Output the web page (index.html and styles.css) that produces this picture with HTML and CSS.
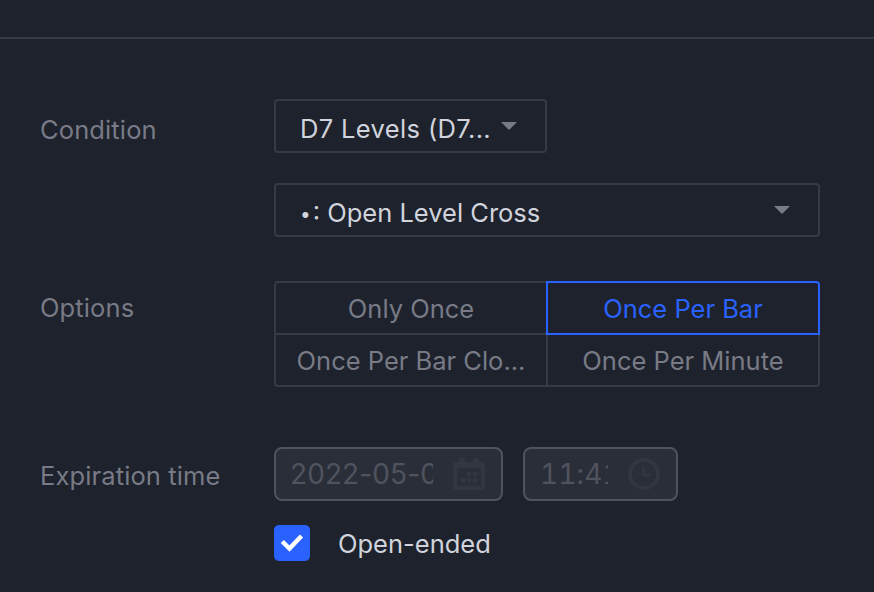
FILE: index.html
```html
<!DOCTYPE html>
<html lang="en">
<head>
<meta charset="utf-8">
<title>Create Alert</title>
<link rel="stylesheet" href="styles.css">
</head>
<body>
<main class="dialog">
  <header class="dialog-header"></header>
  <form class="form">
    <div class="row row-condition">
      <div class="label"><span>Condition</span></div>
      <div class="control selects">
        <div class="select select-half"><span class="t-source">D7 Levels (D7...</span><svg class="caret" viewBox="0 0 16 8"><path d="M0 0h16L8 8z"/></svg></div>
        <div class="select"><span class="t-plot"><span class="bullet">•</span>: Open Level Cross</span><svg class="caret" viewBox="0 0 16 8"><path d="M0 0h16L8 8z"/></svg></div>
      </div>
    </div>
    <div class="row row-options">
      <div class="label"><span>Options</span></div>
      <div class="control options">
        <div class="option tl"><span>Only Once</span></div>
        <div class="option tr active"><span>Once Per Bar</span></div>
        <div class="option bl"><span>Once Per Bar Clo...</span></div>
        <div class="option br"><span>Once Per Minute</span></div>
      </div>
    </div>
    <div class="row row-expiration">
      <div class="label"><span>Expiration time</span></div>
      <div class="control">
        <div class="fields">
          <div class="field field-date"><span class="value">2022-05-0</span>
            <svg class="icon" viewBox="0 0 32 32"><path fill-rule="evenodd" d="M6 4V2q0-2 2-2h2q2 0 2 2v2h8V2q0-2 2-2h2q2 0 2 2v2h4q2 0 2 2v24q0 2-2 2H2q-2 0-2-2V6q0-2 2-2zM4 10v18h24V10z"/><path d="M14 14h4v4h-4zM20 14h4v4h-4zM8 20h4v4H8zM14 20h4v4h-4zM20 20h4v4h-4z"/></svg>
          </div>
          <div class="field field-time"><span class="value">11:41</span>
            <svg class="icon" viewBox="0 0 32 32"><circle class="stroke" cx="16" cy="16" r="14"/><path class="stroke thin" d="M15.500 9.500v7.500h7"/></svg>
          </div>
        </div>
        <div class="check-row">
          <div class="checkbox"><svg viewBox="0 0 36 36"><path d="M8.300 16.500l7.200 7L27.500 11"/></svg></div>
          <span class="t-open">Open-ended</span>
        </div>
      </div>
    </div>
  </form>
</main>
</body>
</html>
```
FILE: styles.css
```css
* { box-sizing: border-box; }

body {
  margin: 0;
  background: #1e222d;
  font-family: Inter, "Liberation Sans", sans-serif;
  font-size: 25.5px;
  line-height: 32px;
  letter-spacing: 0;
  color: #d1d4dc;
}

.dialog { height: 592px; overflow: hidden; }
.dialog-header { height: 39px; border-bottom: 2px solid #363a45; }
.form { padding: 60px 54px 0 40px; }

.row { display: grid; grid-template-columns: 234px 546px; }
.row-options { margin-top: 44px; }
.row-expiration { margin-top: 60px; }

.label { height: 54px; padding-top: 15px; color: #787b86; white-space: nowrap; letter-spacing: 0.12px; }
.row-options .label { padding-top: 11px; }
.row-expiration .label { padding-top: 15px; }

.selects { display: grid; gap: 30px; }
.select {
  display: flex;
  justify-content: space-between;
  height: 54px;
  padding: 12px 28px 0 24px;
  border: 2px solid #363a45;
  border-radius: 4px;
  white-space: nowrap;
}
.select-half { width: 273px; }
.t-source { letter-spacing: 0.36px; }
.bullet { font-size: 19px; letter-spacing: 2px; vertical-align: 1px; line-height: 1; }
.caret { width: 16px; height: 8px; margin-top: 9px; fill: #787b86; }

.options { display: grid; grid-template-columns: 272px 272px; grid-template-rows: 52px 52px; }
.option {
  width: 274px;
  height: 54px;
  padding-top: 10px;
  border: 2px solid #363a45;
  color: #787b86;
  text-align: center;
  white-space: nowrap;
}
.tl { border-top-left-radius: 4px; }
.tr { border-top-right-radius: 4px; }
.bl { border-bottom-left-radius: 4px; }
.br { border-bottom-right-radius: 4px; }
.active { z-index: 1; border-color: #2962ff; color: #2962ff; }

.fields { display: flex; gap: 20px; margin-top: 2px; }
.field {
  display: flex;
  justify-content: space-between;
  height: 54px;
  padding: 9px 16px 0 14px;
  border: 2px solid #50535e;
  border-radius: 8px;
  background: #2a2e39;
  color: #50535e;
}
.field-date { width: 229px; }
.field-time { width: 155px; padding-left: 15px; }
.value { overflow: hidden; font-size: 28px; white-space: nowrap; }
.field-date .value { width: 143px; letter-spacing: 0.1px; }
.field-time .value { width: 68px; font-variant-numeric: tabular-nums; letter-spacing: 0.1px; }
.icon { width: 32px; height: 32px; fill: #323641; }
.stroke { fill: none; stroke: #323641; stroke-width: 4; }
.thin { stroke-width: 3; }

.check-row { display: flex; gap: 28px; margin-top: 24px; }
.checkbox { width: 36px; height: 36px; border-radius: 5px; background: #2962ff; }
.checkbox svg { display: block; }
.checkbox path { fill: none; stroke: #fff; stroke-width: 4.500; }
.t-open { padding-top: 3px; }
```
